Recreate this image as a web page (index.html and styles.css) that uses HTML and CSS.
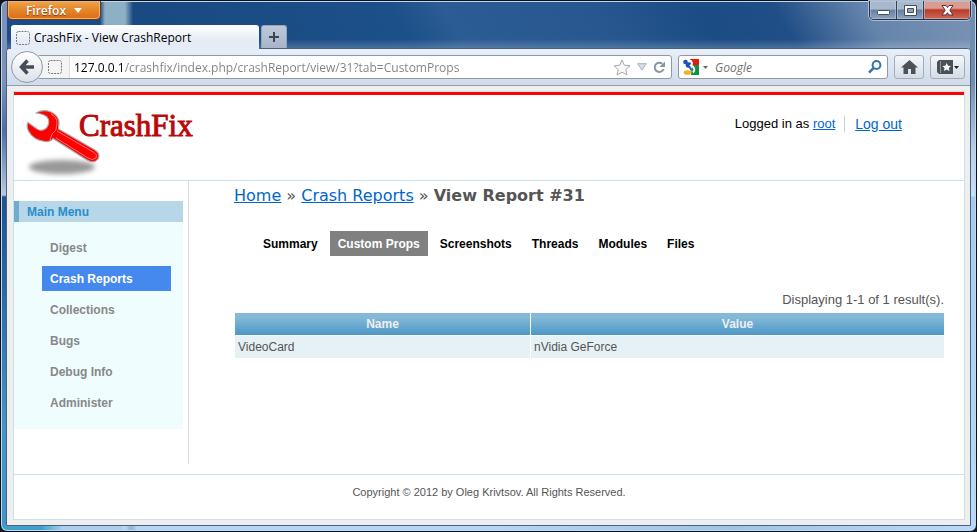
FILE: index.html
```
<!DOCTYPE html>
<html lang="en">
<head>
<meta charset="utf-8">
<title>CrashFix - View CrashReport</title>
<link rel="stylesheet" href="styles.css">
</head>
<body>
<div class="window">
  <div class="titlebar">
    <button class="app-menu" type="button">Firefox
      <svg width="8" height="5" viewBox="0 0 8 5"><path d="M0 0h8L4 5z" fill="#fff"/></svg>
    </button>
    <div class="window-controls">
      <button type="button" aria-label="Minimize">
        <svg width="13" height="11" viewBox="0 0 13 11"><rect x=".5" y="5.500" width="12" height="4" rx="1" fill="#fff" stroke="#444d5e"/></svg>
      </button>
      <button type="button" aria-label="Maximize">
        <svg width="13" height="11" viewBox="0 0 13 11"><path d="M.5.5h12v10H.5z" fill="#fff" stroke="#444d5e"/><path d="M3.500 3.500h6v4h-6z" fill="#8fa4c0" stroke="#444d5e"/></svg>
      </button>
      <button class="close" type="button" aria-label="Close">
        <svg width="13" height="11" viewBox="0 0 13 11"><path d="M1 .5h4L6.500 2.500 8 .5h4L8.800 5.200 12 10H8L6.500 7.700 5 10H1l3.200-4.800z" fill="#fff" stroke="#59303a"/></svg>
      </button>
    </div>
  </div>
  <div class="tabstrip">
    <div class="tab">
      <svg width="14" height="14" viewBox="0 0 14 14"><rect x=".5" y=".5" width="13" height="13" rx="2" fill="none" stroke="#777" stroke-dasharray="2 1"/></svg>
      <span>CrashFix - View CrashReport</span>
    </div>
    <button class="new-tab" type="button" aria-label="New tab">
      <svg width="10" height="10" viewBox="0 0 10 10"><path d="M5 0v10M0 5h10" stroke="#3d4550" stroke-width="2"/></svg>
    </button>
  </div>
  <div class="client">
    <div class="toolbar">
      <button class="back" type="button" aria-label="Back">
        <svg width="16" height="16" viewBox="0 0 16 16"><path d="M8.500 1.500 2.500 8l6 6.500M3 8h12" fill="none" stroke="#444d57" stroke-width="3.500"/></svg>
      </button>
      <div class="address">
        <span class="identity">
          <svg width="14" height="14" viewBox="0 0 14 14"><rect x=".5" y=".5" width="13" height="13" rx="2" fill="none" stroke="#777" stroke-dasharray="2 1"/></svg>
        </span>
        <input class="url" type="text" aria-label="Address" value="127.0.0.1/crashfix/index.php/crashReport/view/31?tab=CustomProps">
        <div class="address-icons">
          <svg width="18" height="17" viewBox="0 0 18 17"><path d="m9 1 2.300 5.200 5.700.6-4.200 3.800 1.200 5.400L9 13.200 4 16l1.200-5.400L1 6.800l5.700-.6z" fill="#f8f8f8" stroke="#a3a9b0"/></svg>
          <svg width="10" height="8" viewBox="0 0 10 8"><path d="M.7.7h8.600L5 7z" fill="#d6dfe7" stroke="#a5b0ba"/></svg>
          <svg width="13" height="13" viewBox="0 0 13 13"><path d="M9.300 2.800A4.600 4.600 0 1 0 10.600 8" fill="none" stroke="#8795a3" stroke-width="2"/><path d="M12 .5V6H6.500z" fill="#8795a3"/></svg>
        </div>
      </div>
      <div class="search">
        <svg width="16" height="16" viewBox="0 0 16 16"><path d="M7 0h9v6H8z" fill="#e8180c"/><path d="M9 6h7v10H8z" fill="#109140"/><circle cx="2.500" cy="3" r="2.300" fill="#1c50b4"/><circle cx="5.500" cy="6" r="2.800" fill="#1c50b4"/><path d="M6 1.500c3 0 4 3 2 5 4 2 4 5 2 7" fill="none" stroke="#fff" stroke-width="2"/><path d="M6 8.500q2.500.5 2 3" stroke="#1c50b4" stroke-width="1.500" fill="none"/><ellipse cx="4.500" cy="13.500" rx="3.800" ry="2.300" fill="#f5b21c"/></svg>
        <svg width="5" height="3" viewBox="0 0 5 3"><path d="M0 0h5L2.500 3z" fill="#666"/></svg>
        <input type="text" aria-label="Search" placeholder="Google">
        <svg width="14" height="14" viewBox="0 0 14 14"><circle cx="8.500" cy="5" r="3.900" fill="#f3f8fd" stroke="#3971ab" stroke-width="2"/><path d="M5.700 7.800 1 12.700" stroke="#3971ab" stroke-width="2.500"/></svg>
      </div>
      <button class="tool" type="button" aria-label="Home">
        <svg width="17" height="14" viewBox="0 0 17 14"><path d="M8.500 0 17 7.500h-2.500V14H10V9H7v5H2.500V7.500H0z" fill="#4a5159"/></svg>
      </button>
      <button class="tool bookmarks" type="button" aria-label="Bookmarks">
        <svg width="16" height="14" viewBox="0 0 16 14"><path d="M2 0h14v14H2L0 12V2z" fill="#4a5159"/><path d="M3.500 1v12" stroke="#8c939b"/><path d="m9.700 3 1.300 2.800 3 .3-2.200 2 .6 3-2.700-1.500L7 11.100l.6-3-2.200-2 3-.3z" fill="#fff"/></svg>
        <svg width="5" height="3" viewBox="0 0 5 3"><path d="M0 0h5L2.500 3z" fill="#222"/></svg>
      </button>
    </div>
    <div class="viewport">
      <div class="page">
        <header class="page-header">
          <div class="logo">
            <svg width="78" height="72" viewBox="0 0 78 72">
              <defs><filter id="soft" x="-20%" y="-50%" width="140%" height="200%"><feGaussianBlur stdDeviation="2.500"/></filter></defs>
              <ellipse cx="38" cy="60" rx="33" ry="7" fill="#999" filter="url(#soft)"/>
              <path d="M12 6Q19 2 27 5 35 9 35 16L34.500 22 71 43Q77 47 74 52 70 57 63 53L29 31.500Q27 35 21 34.500 9 33 4.500 24 2 19 4 15.500L13 22Q18 25 22.500 21 27 15 23 10 20 7 12 6z" fill="#f00" stroke="#aaa" stroke-width="1.200" stroke-linejoin="round"/>
              <path d="M33 24 70 45.500Q74 48 72 51 69 54 64 51L32 31M27 7Q33 10 33 16L32 23Q27 26 26 33" fill="none" stroke="#ff8c8c" stroke-width=".8"/>
            </svg>
            <span class="logo-text">CrashFix</span>
          </div>
          <div class="session">
            <span class="user">Logged in as <a href="#">root</a></span>
            <a class="logout" href="#">Log out</a>
          </div>
        </header>
        <div class="columns">
          <aside class="sidebar">
            <h2>Main Menu</h2>
            <ul>
              <li><a href="#">Digest</a></li>
              <li><a class="active" href="#">Crash Reports</a></li>
              <li><a href="#">Collections</a></li>
              <li><a href="#">Bugs</a></li>
              <li><a href="#">Debug Info</a></li>
              <li><a href="#">Administer</a></li>
            </ul>
          </aside>
          <main class="content">
            <div class="breadcrumbs"><a href="#">Home</a> » <a href="#">Crash Reports</a> » <strong>View Report #31</strong></div>
            <nav class="report-tabs">
              <a href="#">Summary</a>
              <a class="active" href="#">Custom Props</a>
              <a href="#">Screenshots</a>
              <a href="#">Threads</a>
              <a href="#">Modules</a>
              <a href="#">Files</a>
            </nav>
            <p class="result-count">Displaying 1-1 of 1 result(s).</p>
            <table>
              <thead><tr><th class="name">Name</th><th>Value</th></tr></thead>
              <tbody><tr><td>VideoCard</td><td>nVidia GeForce</td></tr></tbody>
            </table>
          </main>
        </div>
        <footer>Copyright © 2012 by Oleg Krivtsov. All Rights Reserved.</footer>
      </div>
    </div>
  </div>
</div>
</body>
</html>
```
FILE: styles.css
```
* { box-sizing: border-box; }

body {
  margin: 0;
  background: #10141c;
  font-family: "Liberation Sans", sans-serif;
  font-size: 12px;
}

button, input { font: inherit; }
button { padding: 0; }
svg { display: block; flex: none; }

/* Window frame */
.window {
  display: flex;
  flex-direction: column;
  min-height: 100vh;
  padding: 0 5px 5px;
  border: 1px solid #0a1220;
  border-radius: 7px;
  box-shadow: inset 0 0 0 1px #c3d7ea;
  background:
    linear-gradient(90deg, #3fa0cb 0 40px, #a9cff0 62px 120px, #b5daf8 124px, #8fb3d4 130px, #b3d6f8 136px 50%, #9cc5e8 75%, #b7dafc) bottom / 100% 6px no-repeat,
    linear-gradient(#6f8db0 0 80px, #b9cfe8 150px, #c5e0fa 195px, #a4cbef 196px, #b7dafc) right / 6px 100% no-repeat,
    linear-gradient(#7b93b8 0 80px, #4a70a5 130px, #b7c9df 194px, #1c5395 196px, #2566a5 280px, #3d96c6 420px) left / 6px 100% no-repeat,
    linear-gradient(transparent 38px, #ffffff30 47px, transparent 48px),
    linear-gradient(90deg, transparent 99px, #8eb0c4 104px 124px, transparent 132px) top / 100% 26px no-repeat,
    linear-gradient(60deg, #7590b5 0, #244d87 8%, #1a4a82 35%, #1c5088 54%, #2b5c93 58%, #28578f 70%, #1c4c84 78%, #204e86 84%, #6685ac 91%, #7b94b4);
  font-family: "Open Sans", sans-serif;
}

.titlebar {
  display: flex;
  justify-content: space-between;
  align-items: flex-start;
  height: 24px;
}

.app-menu {
  display: flex;
  align-items: center;
  justify-content: center;
  gap: 8px;
  width: 94px;
  height: 19px;
  margin-left: 1px;
  border: 1px solid #6b3a1c;
  border-top: 0;
  border-radius: 0 0 5px 5px;
  background: linear-gradient(#eba64e, #e58529 50%, #dc6d14);
  box-shadow: inset 0 0 0 1px #f3b26b;
  color: #fff;
  font-weight: 600;
  text-shadow: 0 1px 1px #7a3c0c;
}

.window-controls {
  display: flex;
  height: 19px;
  border: 1px solid #243349;
  border-top: 0;
  border-radius: 0 0 5px 5px;
  overflow: hidden;
  box-shadow: 0 0 0 1px #a9bdd3;
}

.window-controls button {
  display: flex;
  align-items: center;
  justify-content: center;
  width: 27px;
  border: 0;
  border-right: 1px solid #33435a;
  background: linear-gradient(#a9b8cc 0 45%, #6680a3 50%, #8ca3c0);
  box-shadow: inset 0 0 0 1px #c5d1df80;
}

.window-controls .close {
  width: 46px;
  border-right: 0;
  background: linear-gradient(#d99b92 0 40%, #b73b2b 50%, #d06a52);
}

.tabstrip {
  display: flex;
  gap: 2px;
  height: 23px;
  padding-left: 5px;
}

.tab {
  display: flex;
  align-items: center;
  gap: 4px;
  width: 248px;
  height: 25px;
  padding: 0 5px;
  border-radius: 3px 3px 0 0;
  background: linear-gradient(#fff, #e5ecf6 60%);
  position: relative;
  color: #000;
}

.new-tab {
  display: flex;
  align-items: center;
  justify-content: center;
  width: 26px;
  border: 1px solid #96a5b9;
  border-bottom: 0;
  border-radius: 3px 3px 0 0;
  background: linear-gradient(#bdc9d9, #a7b5c9);
}

.client {
  display: flex;
  flex: 1;
  flex-direction: column;
  border: 1px solid #4b617c;
  border-radius: 4px 4px 0 0;
  background: #eee;
}

.toolbar {
  display: flex;
  align-items: center;
  height: 37px;
  padding: 0 5px 0 4px;
  border-bottom: 1px solid #969da6;
  border-radius: 3px 3px 0 0;
  background: linear-gradient(#e8eff8, #cfdbeb);
}

.back {
  display: flex;
  align-items: center;
  justify-content: center;
  flex: none;
  width: 32px;
  height: 32px;
  margin-right: -6px;
  border: 1px solid #8f99a6;
  border-radius: 50%;
  background: linear-gradient(#fff, #dde1e7);
  position: relative;
}

.address, .search {
  display: flex;
  align-items: center;
  height: 24px;
  border: 1px solid #8f99a6;
  border-radius: 3px;
  background: #fff;
}

.address { flex: 1; margin-right: 6px; }

.identity {
  display: flex;
  align-items: center;
  align-self: stretch;
  padding: 0 7px 0 10px;
  border-right: 1px solid #ddd;
  background: #f4f4f4;
}

input {
  flex: 1;
  min-width: 0;
  padding: 0;
  border: 0;
  outline: 0;
  background: none;
}

/* The host part of the address is darker than the path */
.url {
  margin-left: 4px;
  color: transparent;
  background: linear-gradient(90deg, #000 48px, #808080 48px);
  -webkit-background-clip: text;
  background-clip: text;
}

.address-icons {
  display: flex;
  align-items: center;
  gap: 6px;
  padding-right: 5px;
}

.search { width: 210px; padding: 0 5px 0 4px; }
.search input { margin-left: 7px; font-style: italic; }
.search input::placeholder { color: #707070; opacity: 1; }
.search svg + svg { margin-left: 4px; }

.tool {
  display: flex;
  align-items: center;
  justify-content: center;
  flex: none;
  width: 30px;
  height: 24px;
  margin-left: 6px;
  border: 1px solid #a3acb8;
  border-radius: 3px;
  background: linear-gradient(#f5f7fa, #d5dce6);
}

.bookmarks { width: 35px; gap: 1px; }

.viewport {
  display: flex;
  flex: 1;
  padding: 5px 5px 5px 6px;
}

/* Site */
.page {
  display: flex;
  flex: 1;
  flex-direction: column;
  border: 1px solid #c9e0ed;
  background: #fff;
  font-family: "Liberation Sans", sans-serif;
}

.page-header {
  display: flex;
  justify-content: space-between;
  height: 89px;
  border-top: 3px solid #f00;
  border-bottom: 1px solid #c9e0ed;
}

.logo { display: flex; padding: 12px 0 0 10px; }

.logo-text {
  margin-left: -23px;
  color: #b80a0a;
  font-family: "Liberation Serif", serif;
  font-size: 31px;
  line-height: 38px;
  -webkit-text-stroke: 1px #b80a0a;
}

.session {
  display: flex;
  align-items: center;
  align-self: flex-start;
  margin: 21px 62px 0 0;
}

a { color: #06c; }
.user { padding-right: 9px; border-right: 1px solid #ccc; font-size: 13px; line-height: 16px; }
.logout { padding-left: 10px; font-size: 14px; }

.columns { display: flex; flex: 1; margin-bottom: 10px; }

.sidebar {
  width: 175px;
  padding: 20px 5px 0 0;
  border-right: 1px solid #ddd;
  flex: none;
}

.sidebar h2 {
  margin: 0;
  padding: 1px 0 0 8px;
  border-left: 5px solid #6faccf;
  background: #b7d6e7;
  color: #298dcd;
  font-size: 12px;
  line-height: 20px;
}

.sidebar ul {
  display: flex;
  flex-direction: column;
  gap: 6px;
  margin: 0;
  padding: 13px 12px 14px 28px;
  background: #effdff;
  list-style: none;
}

.sidebar a, .report-tabs a {
  display: block;
  padding: 1px 8px 0;
  font-weight: bold;
  line-height: 24px;
  text-decoration: none;
}

.sidebar a { color: #888; }
.sidebar .active { background: #4588ee; color: #fff; }

.content {
  flex: 1;
  min-width: 0;
  padding: 5px 19px 0 45px;
  color: #555;
}

.breadcrumbs {
  font-family: "DejaVu Sans", sans-serif;
  font-size: 16px;
  line-height: 20px;
}

.report-tabs {
  display: flex;
  gap: 4px;
  margin: 25px 0 0 21px;
}

.report-tabs a { color: #000; }
.report-tabs .active { background: #808080; color: #fff; }

.result-count {
  margin: 36px 1px 4px 0;
  font-size: 13px;
  line-height: 16px;
  text-align: right;
}

table { width: 100%; border-spacing: 1px; }
th, td { height: 22px; padding: 1px 3px 0; line-height: 21px; }
th { background: linear-gradient(#84b9d8 20%, #4b97c6); color: #eee; }
.name { width: 295px; }
td { background: #e5f1f4; }

footer {
  height: 45px;
  border-top: 1px solid #c9e0ed;
  font-size: 11px;
  line-height: 35px;
  text-align: center;
  color: #555;
}
```
